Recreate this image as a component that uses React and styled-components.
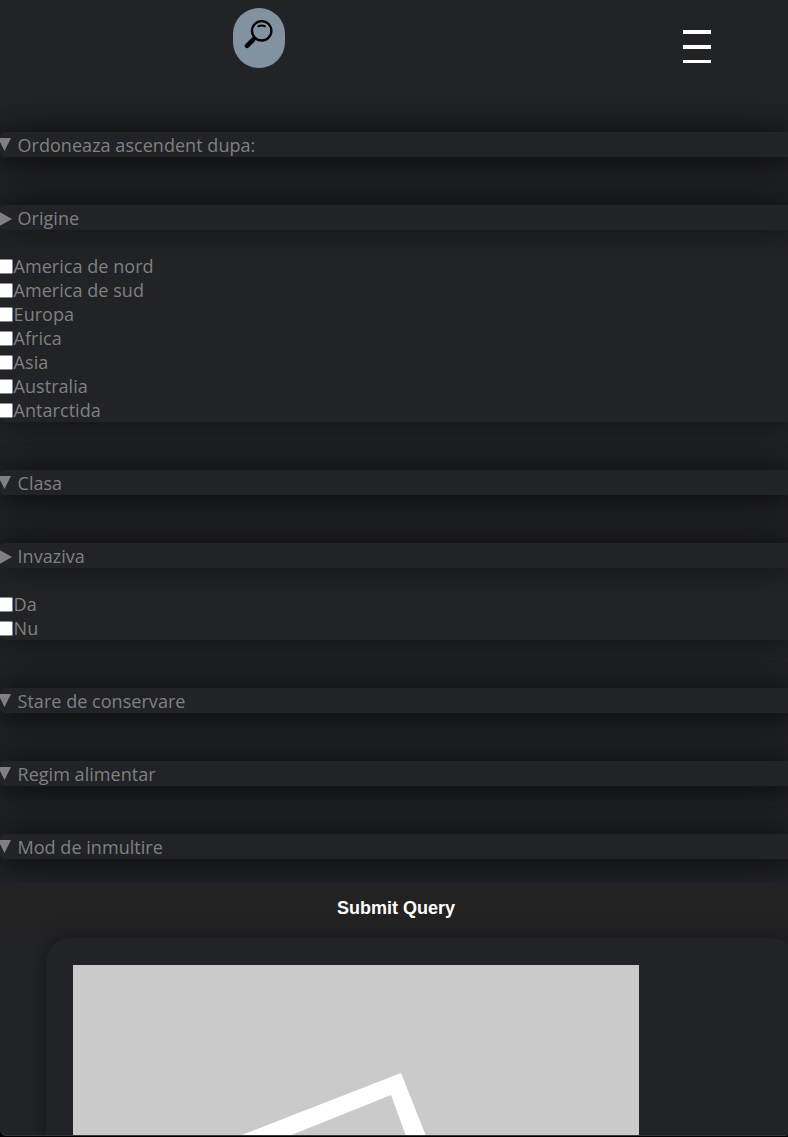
import React from "react";
import styled, { createGlobalStyle } from "styled-components";

const GlobalStyle = createGlobalStyle`
  * { box-sizing: border-box; }
  html, body { margin: 0; background: #222327; overflow: hidden; }
`;

const Page = styled.div`
  height: 1137px;
  overflow: hidden;
  display: flex;
  flex-direction: column;
  background: #000;
  font: 18px/24px "Open Sans", "Noto Sans", sans-serif;
  letter-spacing: 0.04px;
  color: gray;
`;

const Screen = styled.main`
  height: 1136px;
  flex: none;
  overflow: hidden;
  display: flex;
  flex-direction: column;
  background: #222327;
  border-bottom: 1px solid #35353a;
  border-radius: 0 0 3px 6px;
`;

const Header = styled.header`
  display: flex;
  flex: none;
  justify-content: space-between;
  height: 132px;
  padding: 8px 77px 0 233px;
`;

const SearchButton = styled.button`
  width: 52px;
  height: 60px;
  padding: 0;
  border: 0;
  border-radius: 26px;
  background: #8392a0;
  svg { display: block; }
`;

const MenuButton = styled.button`
  display: flex;
  flex-direction: column;
  gap: 11px;
  width: 28px;
  height: 33px;
  margin-top: 22px;
  padding: 0;
  border: 0;
  background: none;
`;

const MenuLine = styled.span`
  flex: none;
  height: ${(p) => (p.$thin ? 3 : 4)}px;
  background: #fff;
`;

const Filters = styled.form`
  display: flex;
  flex: none;
  flex-direction: column;
  gap: 48px;
  width: 794px;
`;

const Group = styled.section`
  background: #222327;
  border-radius: 5px;
  box-shadow: 0 0 40px rgba(0, 0, 0, 0.5);
`;

const GroupTitle = styled.div`
  display: flex;
  align-items: center;
  gap: ${(p) => (p.$right ? 5.5 : 6.5)}px;
  height: 25px;
  padding-top: 1px;
  background: #222327;
  border-radius: 5px;
  box-shadow: 0 5px 30px rgba(0, 0, 0, 0.4);
  svg { flex: none; margin-top: ${(p) => (p.$right ? 1 : -2)}px; }
`;

const Options = styled.div`
  padding-top: 24px;
`;

const Option = styled.label`
  display: flex;
  align-items: center;
  gap: 0.6px;
  height: 24px;
`;

const Box = styled.span`
  flex: none;
  width: 13px;
  height: 15px;
  margin-top: 1px;
  border: 1px solid #8a8999;
  border-left: 0;
  border-radius: 0 2px 2px 0;
  background: #fff;
`;

const Submit = styled.button`
  flex: none;
  height: 49px;
  margin-top: 24px;
  padding: 2px 0 0 4px;
  border: 0;
  background: #222;
  color: #fff;
  font: bold 18px "Liberation Sans", Arial, sans-serif;
`;

const Card = styled.article`
  flex: none;
  width: 750px;
  height: 400px;
  margin: 6px 0 0 46px;
  padding: 27px;
  border-radius: 24px;
  background: #222327;
  box-shadow: 0 0 20px rgba(0, 0, 0, 0.4);
`;

const Picture = styled.svg`
  display: block;
  width: 566px;
  height: 373px;
  background: #cacaca;
`;

function Marker({ right }) {
  return right ? (
    <svg width="12" height="14" viewBox="0 0 12 14" fill="gray"><path d="M0 .2 12 7 0 13.8Z" /></svg>
  ) : (
    <svg width="11" height="13" viewBox="0 0 11 13" fill="gray"><path d="M-2 0H11L4.5 13Z" /></svg>
  );
}

const groups = [
  { title: "Ordoneaza ascendent dupa:" },
  { title: "Origine", options: ["America de nord", "America de sud", "Europa", "Africa", "Asia", "Australia", "Antarctida"] },
  { title: "Clasa" },
  { title: "Invaziva", options: ["Da", "Nu"] },
  { title: "Stare de conservare" },
  { title: "Regim alimentar" },
  { title: "Mod de inmultire" },
];

export default function App() {
  return (
    <Page>
      <GlobalStyle />
      <Screen>
        <Header>
          <SearchButton aria-label="Search">
            <svg width="52" height="60" viewBox="0 0 52 60" fill="none" stroke="#000">
              <circle cx="28.7" cy="22.8" r="9.7" strokeWidth="2.3" />
              <path d="M25.2 18.4q3.5-1.8 6.8 0" strokeWidth="1.8" strokeLinecap="round" />
              <path d="m21.7 29.5-2 2" strokeWidth="2.5" />
              <path d="m20 31.8-6 6" strokeWidth="4.6" strokeLinecap="round" />
            </svg>
          </SearchButton>
          <MenuButton aria-label="Menu">
            <MenuLine />
            <MenuLine />
            <MenuLine $thin />
          </MenuButton>
        </Header>
        <Filters>
          {groups.map((g) => (
            <Group key={g.title}>
              <GroupTitle $right={!!g.options}>
                <Marker right={!!g.options} />
                {g.title}
              </GroupTitle>
              {g.options && (
                <Options>
                  {g.options.map((o) => (
                    <Option key={o}><Box />{o}</Option>
                  ))}
                </Options>
              )}
            </Group>
          ))}
        </Filters>
        <Submit>Submit Query</Submit>
        <Card>
          <Picture viewBox="0 0 566 373">
            <path d="M166 171 328 108 353 171H333L318 130 216 171Z" fill="#fff" />
          </Picture>
        </Card>
      </Screen>
    </Page>
  );
}
